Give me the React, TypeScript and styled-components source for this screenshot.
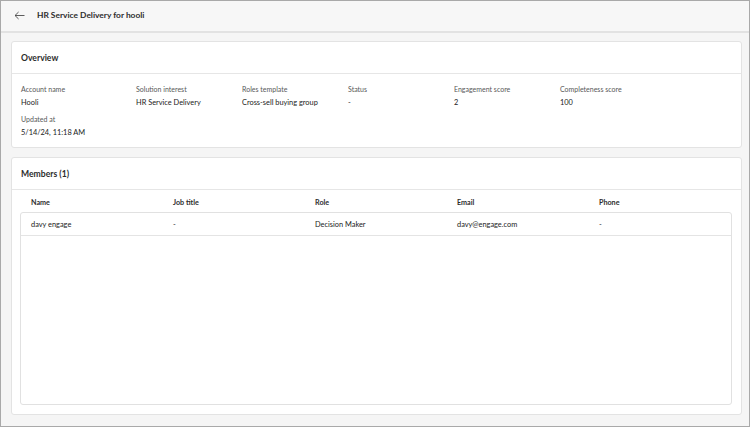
import React from 'react';
import styled, { createGlobalStyle } from 'styled-components';

const GlobalStyle = createGlobalStyle`
	* {
		box-sizing: border-box;
	}
	body {
		margin: 0;
		font-family: Lato, 'Noto Sans', sans-serif;
		color: #2c2c2c;
		background: #f4f4f4;
	}
`;

const Frame = styled.div`
	display: flex;
	flex-direction: column;
	width: 750px;
	height: 427px;
	border: 1px solid #a9a9a9;
	background: #f5f5f5;
`;

const TopBar = styled.header`
	display: flex;
	align-items: center;
	gap: 12px;
	height: 32px;
	padding: 0 0 2px 12px;
	border-bottom: 2px solid #e2e2e2;
	background: #f7f7f7;
`;

const BackButton = styled.button`
	display: flex;
	align-items: center;
	justify-content: center;
	width: 12px;
	height: 12px;
	padding: 0;
	border: none;
	background: none;
	color: #4b4b4b;
`;

const Title = styled.h1`
	margin: 0;
	font-size: 8.4px;
	font-weight: 700;
	color: #2c2c2c;
`;

const Content = styled.main`
	flex: 1;
	display: flex;
	flex-direction: column;
	gap: 9px;
	padding: 8px 7px 11px 10px;
	min-height: 0;
`;

const Card = styled.section<{ $grow?: boolean }>`
	display: flex;
	flex-direction: column;
	flex: ${(p) => (p.$grow ? 1 : 'none')};
	min-height: 0;
	background: #fff;
	border: 1px solid #e3e3e3;
	border-radius: 3px;
`;

const CardHeader = styled.div`
	display: flex;
	align-items: center;
	height: 32px;
	padding: 0 9px;
	border-bottom: 1px solid #e6e6e6;
	font-size: 8.6px;
	font-weight: 700;
	color: #2c2c2c;
`;

const FieldGrid = styled.div`
	display: grid;
	grid-template-columns: 115px repeat(5, 106px);
	row-gap: 7px;
	padding: 11px 9px 9px;
`;

const Field = styled.div`
	display: flex;
	flex-direction: column;
	gap: 4px;
`;

const Label = styled.span`
	font-size: 7px;
	line-height: 9px;
	color: #585858;
`;

const Value = styled.span`
	font-size: 7.4px;
	line-height: 10px;
	color: #222;
`;

const TableWrap = styled.div`
	flex: 1;
	display: flex;
	flex-direction: column;
	min-height: 0;
	padding: 0 9px 9px 8px;
`;

const HeaderRow = styled.div`
	display: grid;
	grid-template-columns: repeat(5, 1fr);
	height: 22px;
	padding: 3px 1px 0;
	align-items: center;
`;

const HeadCell = styled.div`
	padding-left: 10px;
	font-size: 7.2px;
	font-weight: 700;
	color: #2c2c2c;
`;

const Body = styled.div`
	flex: 1;
	border: 1px solid #e1e1e1;
	border-radius: 3px;
	background: #fff;
`;

const Row = styled.div`
	display: grid;
	grid-template-columns: repeat(5, 1fr);
	align-items: center;
	height: 23px;
	border-bottom: 1px solid #e4e4e4;
`;

const Cell = styled.div`
	padding-left: 10px;
	font-size: 7.4px;
	color: #222;
`;

const fields = [
	{ label: 'Account name', value: 'Hooli' },
	{ label: 'Solution interest', value: 'HR Service Delivery' },
	{ label: 'Roles template', value: 'Cross-sell buying group' },
	{ label: 'Status', value: '-' },
	{ label: 'Engagement score', value: '2' },
	{ label: 'Completeness score', value: '100' },
	{ label: 'Updated at', value: '5/14/24, 11:18 AM' },
];

const columns = ['Name', 'Job title', 'Role', 'Email', 'Phone'];

const members = [['davy engage', '-', 'Decision Maker', 'davy@engage.com', '-']];

export default function App() {
	return (
		<>
			<GlobalStyle />
			<Frame>
				<TopBar>
					<BackButton aria-label='back'>
						<svg width='11' height='9' viewBox='0 0 11 9' fill='none'>
							<path d='M10.5 4.5H1M4.6 1L1 4.5L4.6 8' stroke='currentColor' strokeWidth='0.9' />
						</svg>
					</BackButton>
					<Title>HR Service Delivery for hooli</Title>
				</TopBar>
				<Content>
					<Card>
						<CardHeader>Overview</CardHeader>
						<FieldGrid>
							{fields.map((f) => (
								<Field key={f.label}>
									<Label>{f.label}</Label>
									<Value>{f.value}</Value>
								</Field>
							))}
						</FieldGrid>
					</Card>
					<Card $grow>
						<CardHeader>Members (1)</CardHeader>
						<TableWrap>
							<HeaderRow>
								{columns.map((c) => (
									<HeadCell key={c}>{c}</HeadCell>
								))}
							</HeaderRow>
							<Body>
								{members.map((m) => (
									<Row key={m[0]}>
										{m.map((v, i) => (
											<Cell key={i}>{v}</Cell>
										))}
									</Row>
								))}
							</Body>
						</TableWrap>
					</Card>
				</Content>
			</Frame>
		</>
	);
}
